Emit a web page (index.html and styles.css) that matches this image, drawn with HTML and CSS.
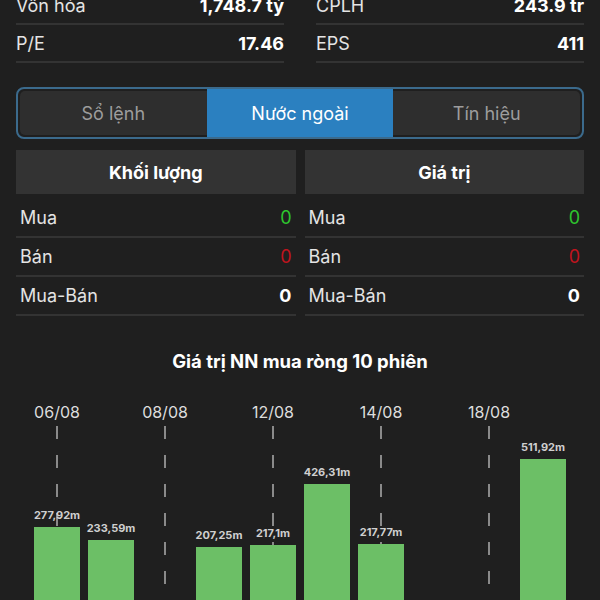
FILE: index.html
```html
<!DOCTYPE html>
<html>
<head lang="vi">
  <meta charset="UTF-8">
  <title>Nước ngoài</title>
  <link rel="stylesheet" href="styles.css">
</head>
<body>

<!-- thông tin cơ bản -->
<div class="info">
  <div class="info-row"><span>Vốn hóa</span><b>1,748.7 tỷ</b></div>
  <div class="info-row"><span>CPLH</span><b>243.9 tr</b></div>
  <div class="info-row"><span>P/E</span><b>17.46</b></div>
  <div class="info-row"><span>EPS</span><b>411</b></div>
</div>

<!-- thanh tab -->
<div class="tabs">
  <div class="tab">Sổ lệnh</div>
  <div class="tab active">Nước ngoài</div>
  <div class="tab">Tín hiệu</div>
</div>

<!-- bảng khối lượng / giá trị -->
<div class="tables">
  <div class="table">
    <div class="table-head">Khối lượng</div>
    <div class="table-row"><span>Mua</span><b class="up">0</b></div>
    <div class="table-row"><span>Bán</span><b class="down">0</b></div>
    <div class="table-row"><span>Mua-Bán</span><b>0</b></div>
  </div>
  <div class="table">
    <div class="table-head">Giá trị</div>
    <div class="table-row"><span>Mua</span><b class="up">0</b></div>
    <div class="table-row"><span>Bán</span><b class="down">0</b></div>
    <div class="table-row"><span>Mua-Bán</span><b>0</b></div>
  </div>
</div>

<!-- biểu đồ -->
<div class="chart-title">Giá trị NN mua ròng 10 phiên</div>
<div class="chart" id="chart"></div>

<script>
  var data = [
    ["06/08", 277.92], ["07/08", 233.59], ["08/08", 0], ["09/08", 207.25], ["12/08", 217.1],
    ["13/08", 426.31], ["14/08", 217.77], ["15/08", 0], ["18/08", 0], ["19/08", 511.92]
  ];
  var chart = document.getElementById("chart");
  var scale = 0.292; // px cho 1m
  for (var i = 0; i < data.length; i++) {
    var slot = document.createElement("div");
    slot.className = "slot";
    var date = document.createElement("div");
    date.className = "date";
    var track = document.createElement("div");
    track.className = "track";
    // chỉ hiện nhãn ngày mỗi 2 phiên
    if (i % 2 == 0 && i < 9) {
      date.innerHTML = data[i][0];
      track.className = "track dashed";
    }
    if (data[i][1] > 0) {
      var label = document.createElement("div");
      label.className = "value";
      label.innerHTML = data[i][1].toString().replace(".", ",") + "m";
      var bar = document.createElement("div");
      bar.className = "bar";
      bar.style.height = Math.round(data[i][1] * scale) + "px";
      track.appendChild(label);
      track.appendChild(bar);
    }
    slot.appendChild(date);
    slot.appendChild(track);
    chart.appendChild(slot);
  }
</script>
</body>
</html>
```

FILE: styles.css
```css
* {
  margin: 0;
  padding: 0;
  box-sizing: border-box;
}

html, body {
  height: 100%;
  overflow: hidden;
}

body {
  background-color: #1f1f1f;
  color: #e4e4e4;
  font-family: Inter, "Noto Sans", "Liberation Sans", sans-serif;
  font-size: 18px;
}

b {
  font-weight: 700;
  color: #fff;
}

.info {
  display: grid;
  grid-template-columns: 1fr 1fr;
  column-gap: 32px;
  margin: -13px 16px 0;
}

.info-row {
  height: 38px;
  border-bottom: 2px solid #333;
  display: flex;
  align-items: center;
  justify-content: space-between;
}

.tabs {
  margin: 24px 16px 0;
  height: 52px;
  border: 2px solid #3b6a8c;
  border-radius: 8px;
  padding: 2px;
  display: flex;
  background-color: #1f1f1f;
}

.tab {
  flex: 1;
  display: flex;
  align-items: center;
  justify-content: center;
  background-color: #2e2e2e;
  color: #9d9d9d;
}

.tab:first-child {
  border-radius: 5px 0 0 5px;
}

.tab:last-child {
  border-radius: 0 5px 5px 0;
}

.tab.active {
  background-color: #2b80c0;
  color: #fff;
  margin: -2px 0;
}

.tables {
  display: flex;
  gap: 9px;
  margin: 11px 16px 0;
}

.table {
  flex: 1;
}

.table-head {
  height: 44px;
  background-color: #333;
  color: #fff;
  font-weight: 700;
  display: flex;
  align-items: center;
  justify-content: center;
  margin-bottom: 5px;
}

.table-row {
  height: 39px;
  border-bottom: 2px solid #333;
  padding: 0 4px;
  display: flex;
  align-items: center;
  justify-content: space-between;
}

.up {
  color: #2ec52e;
  font-weight: 400;
}

.down {
  color: #c0141e;
  font-weight: 400;
}

.chart-title {
  margin-top: 34px;
  text-align: center;
  font-weight: 700;
  font-size: 18.5px;
  color: #fff;
}

.chart {
  display: flex;
  gap: 8px;
  justify-content: center;
  margin-top: 30px;
  height: 206px;
}

.slot {
  width: 46px;
  display: flex;
  flex-direction: column;
}

.date {
  height: 24px;
  display: flex;
  justify-content: center;
  white-space: nowrap;
  font-size: 16px;
  color: #ddd;
}

.track {
  flex: 1;
  display: flex;
  flex-direction: column;
  justify-content: flex-end;
  align-items: center;
}

.track.dashed {
  background: repeating-linear-gradient(to bottom, #8a8a8a 0, #8a8a8a 13px, transparent 13px, transparent 29px) no-repeat center top / 2px 100%;
}

.value {
  font-size: 11px;
  font-weight: 700;
  color: #cfcfcf;
  white-space: nowrap;
  margin-bottom: 5px;
}

.bar {
  width: 46px;
  background-color: #6cbf66;
}
```
